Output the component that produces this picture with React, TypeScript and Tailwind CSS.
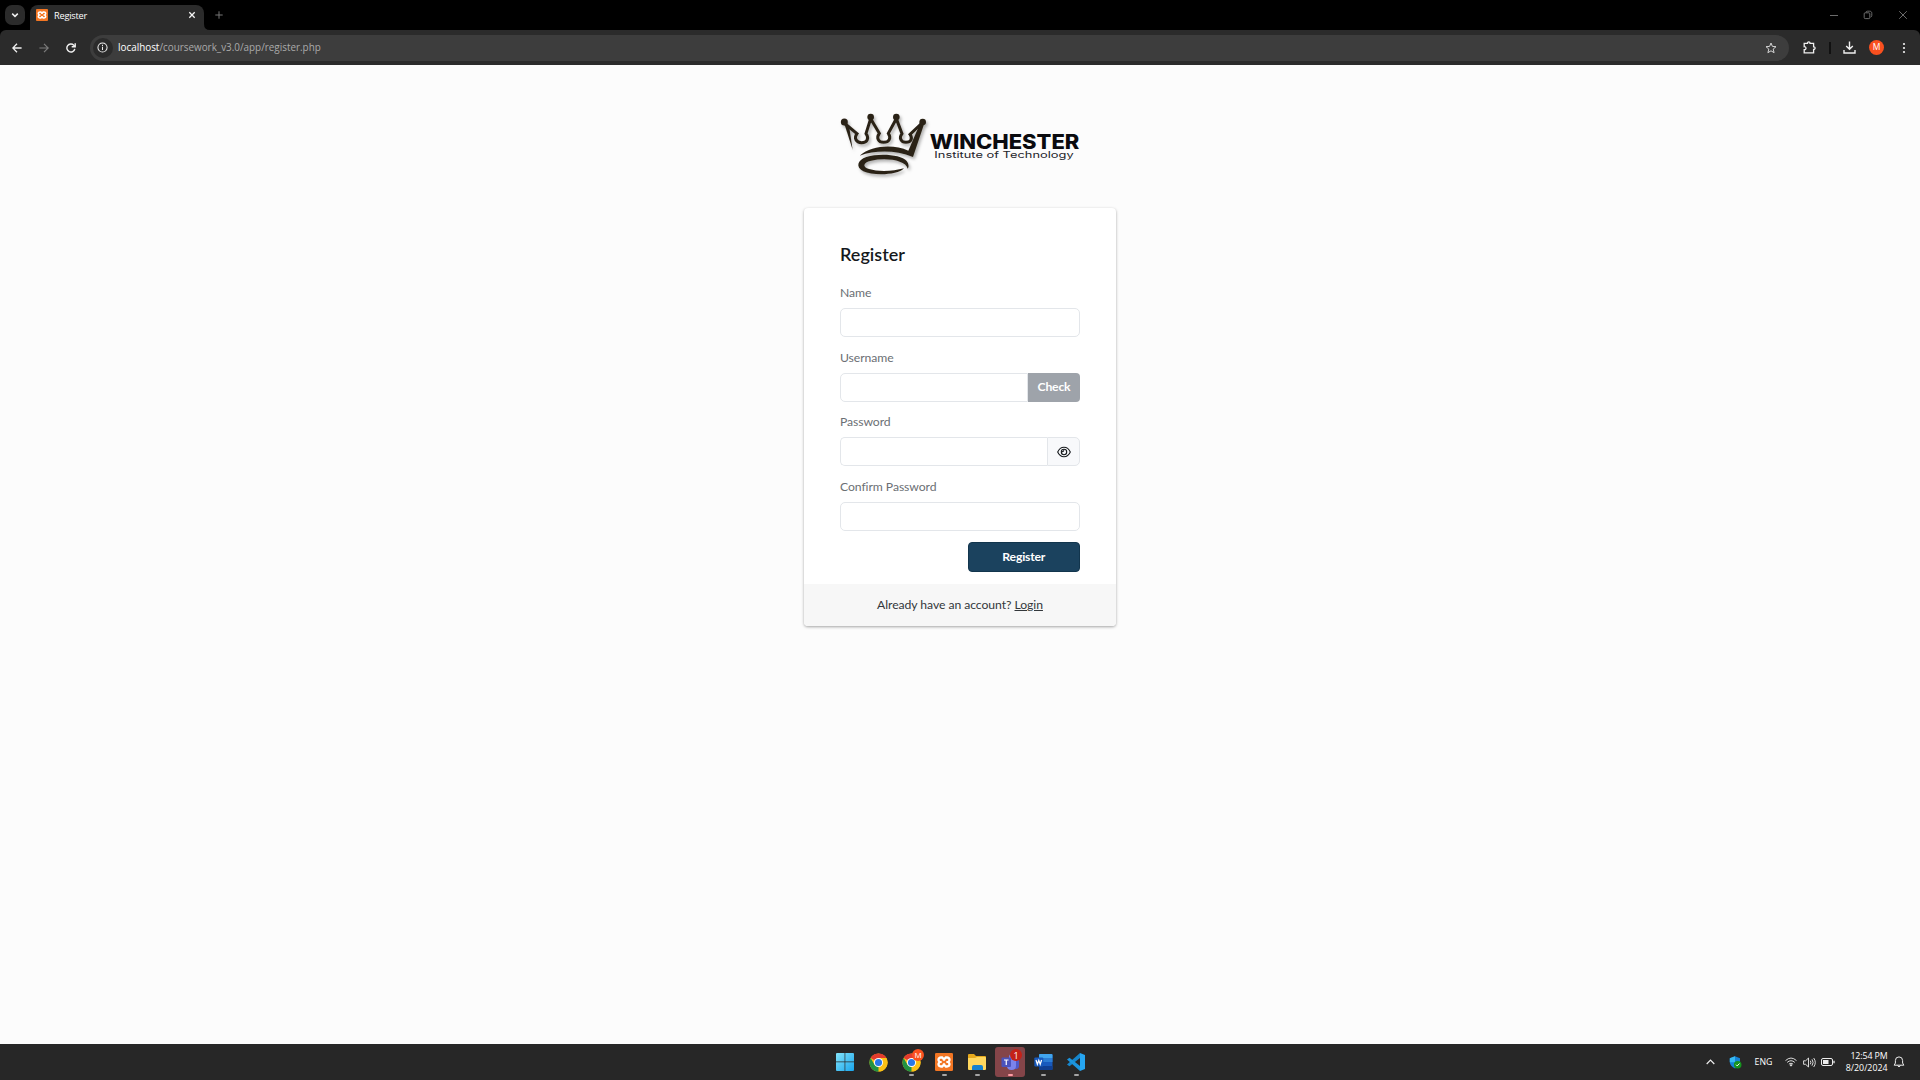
import React from "react";

const ui = "font-['Open_Sans','Noto_Sans',sans-serif]";

function XamppLogo({ className }: { className: string }) {
  return (
    <svg viewBox="0 0 54 54" className={className}>
      <rect width="54" height="54" rx="4" fill="#f37623" />
      <path d="M18 10h5l4 4 4-4h5c6 0 11 4 11 10 0 3-1 5-3 7 2 2 3 4 3 7 0 6-5 10-11 10h-5l-4-4-4 4h-5C12 44 7 40 7 34c0-3 1-5 3-7-2-2-3-4-3-7 0-6 5-10 11-10z" fill="#fff" />
      <path d="M18 17c3 0 4 1 5 3l1 3h6l1-3c1-2 2-3 5-3 2 0 4 1 4 3s-1 4-4 4h-2v6h2c3 0 4 2 4 4s-2 3-4 3c-3 0-4-1-5-3l-1-3h-6l-1 3c-1 2-2 3-5 3-2 0-4-1-4-3s1-4 4-4h2v-6h-2c-3 0-4-2-4-4s2-3 4-3z" fill="#f37623" />
    </svg>
  );
}

function Chrome() {
  return (
    <svg viewBox="0 0 48 48" className="size-[19px]">
      <circle cx="24" cy="24" r="23" fill="#fbc116" />
      <path d="M24 24L4.1 12.5A23 23 0 0 1 43.9 12.5H24z" fill="#e33b2e" />
      <path d="M4.1 12.5L14 29.8 24 35 24 47A23 23 0 0 1 4.1 12.5z" fill="#229342" />
      <path d="M24 47L34 29.8 24 24v-11.5h19.9A23 23 0 0 1 24 47z" fill="#fbc116" />
      <circle cx="24" cy="24" r="11.5" fill="#fff" />
      <circle cx="24" cy="24" r="9" fill="#2878e8" />
    </svg>
  );
}

function TabStrip() {
  return (
    <div className="flex h-[30px] bg-black pl-[5px] text-white">
      <div className="mt-[5px] flex size-5 items-center justify-center rounded-[7px] bg-[#2b2b2b]">
        <svg viewBox="0 0 8 8" className="size-2" fill="none" stroke="#f0f0f0" strokeWidth="1.5"><path d="M1.2 2.6L4 5.4 6.8 2.6" /></svg>
      </div>
      <div className="ml-[5px] mt-[5px] flex h-[25px] w-[174px] items-center rounded-t-[8px] bg-[#2b2b2b] pb-[5px] pl-[6px] pr-[8px]">
        <XamppLogo className="size-3" />
        <span className={`${ui} ml-[6px] mt-px text-[9.2px] leading-none tracking-[-0.2px]`}>Register</span>
        <svg viewBox="0 0 8 8" className="ml-auto size-2" stroke="#f5f5f5" strokeWidth="1.3"><path d="M1.3 1.3l5.4 5.4M6.7 1.3L1.3 6.7" /></svg>
      </div>
      <svg viewBox="0 0 6 6" className="mt-6 size-[6px]"><path d="M0 0Q0 6 6 6H0z" fill="#2b2b2b" /></svg>
      <svg viewBox="0 0 8 8" className="ml-[5px] mt-[11px] size-2" stroke="#777" strokeWidth="1"><path d="M4 .3v7.4M.3 4h7.4" /></svg>
      <div className="ml-auto flex w-[105px] items-start pt-[10px] text-[#777]">
        <svg viewBox="0 0 10 10" className="ml-[14px] size-[10px]" stroke="currentColor" strokeWidth=".9"><path d="M1 5.5h8" /></svg>
        <svg viewBox="0 0 10 10" className="ml-[24px] size-[10px]" fill="none" stroke="currentColor" strokeWidth=".9"><rect x="1.2" y="2.8" width="5.6" height="5.8" rx="1" /><path d="M3 2.4C3 1.6 3.5 1.2 4.4 1.2h2.2C8 1.2 8.8 2 8.8 3.4v2c0 1-.4 1.5-1.2 1.6" /></svg>
        <svg viewBox="0 0 10 10" className="ml-[25px] size-[10px]" stroke="currentColor" strokeWidth=".9"><path d="M1.2 1.2l7.6 7.6M8.8 1.2L1.2 8.8" /></svg>
      </div>
    </div>
  );
}

function Toolbar() {
  return (
    <div className="h-[35px] bg-black">
      <div className="flex h-full items-center rounded-t-[6px] bg-[#2b2b2b]">
        <svg viewBox="0 0 10 10" className="ml-[11.5px] size-[10px]" fill="none" stroke="#f0f0f0" strokeWidth="1.3"><path d="M9.6 5H.9M5 .8L.8 5 5 9.2" /></svg>
        <svg viewBox="0 0 10 10" className="ml-[17px] size-[10px]" fill="none" stroke="#7c7c7c" strokeWidth="1.2"><path d="M.4 5h8.7M5 .8L9.2 5 5 9.2" /></svg>
        <svg viewBox="0 0 10 10" className="ml-[17px] size-[10px]" fill="none" stroke="#f0f0f0" strokeWidth="1.4"><path d="M8.8 5.8A4 4 0 1 1 7.8 2.2L9 3.4" /><path d="M9.2.3v3.5H5.7" /></svg>
        <div className="ml-[14.5px] flex h-[26px] w-[1699px] items-center rounded-full bg-[#3d3d3d]">
          <span className="ml-[2.5px] flex size-5 items-center justify-center rounded-full bg-[#2b2b2b]">
            <svg viewBox="0 0 12 12" className="size-[11px]" fill="none" stroke="#eee" strokeWidth="1.1"><circle cx="6" cy="6" r="5" /><path d="M6 5.3v3.4M6 3.1v1.2" /></svg>
          </span>
          <span className={`${ui} ml-[5.5px] text-[9.9px] leading-none text-[#aaa]`}><span className="text-white">localhost</span>/coursework_v3.0/app/register.php</span>
          <svg viewBox="0 0 12 12" className="ml-auto mr-[12px] size-3" fill="none" stroke="#d5d5d5" strokeWidth="1"><path d="M6 1l1.4 3.4 3.6.3-2.8 2.4.9 3.6L6 8.8l-3.1 1.9.9-3.6L1 4.7l3.6-.3z" /></svg>
        </div>
        <svg viewBox="0 0 13 13" className="ml-[14px] size-[13px]" fill="none" stroke="#f0f0f0" strokeWidth="1.3"><path d="M1.2 2.3H4.5C4.3.4 7.2.4 7 2.3h3.6v3.5c2-.2 2 2.8 0 2.6v3.4H1.2V8.7c2.4.2 2.4-3.2 0-3z" /></svg>
        <span className="ml-[13px] h-3 w-[2px] bg-[#111]" />
        <svg viewBox="0 0 13 13" className="ml-[12px] size-[13px]" fill="none" stroke="#f0f0f0" strokeWidth="1.4"><path d="M6.5.5v7.6M3.2 5l3.3 3.3L9.8 5M1 9v3h11V9" /></svg>
        <span className={`${ui} ml-[13px] flex size-[15px] items-center justify-center rounded-full bg-[#f9501f] text-[8.5px] leading-none text-white`}>M</span>
        <svg viewBox="0 0 4 12" className="ml-[17.5px] h-3 w-1" fill="#f0f0f0"><circle cx="2" cy="2" r="1.1" /><circle cx="2" cy="6" r="1.1" /><circle cx="2" cy="10" r="1.1" /></svg>
      </div>
    </div>
  );
}

function Logo() {
  return (
    <svg viewBox="0 0 840 270" className="h-[90px] w-[280px]">
      <defs>
        <filter id="lift" x="-10%" y="-10%" width="125%" height="130%"><feDropShadow dx="5" dy="7" stdDeviation="4" floodColor="#000" floodOpacity=".3" /></filter>
      </defs>
      <g filter="url(#lift)" fill="#2b2418">
        <circle cx="73" cy="66" r="10.5" /><circle cx="152" cy="51" r="10" /><circle cx="229" cy="51" r="10" /><circle cx="308" cy="66" r="10" />
        <path d="M72 68L98 149 88 83Z" />
        <path d="M76 72L111 101C101 114 108 128 125 128C142 128 148 114 138 101L152 56L178 100C168 114 175 127 191 127C208 127 214 114 205 100L229 56L246 101C236 114 243 127 258 127C273 127 279 115 270 103L306 69" fill="none" stroke="#2b2418" strokeWidth="9" strokeLinejoin="miter" />
        <path d="M119 167C155 136 220 132 265 152L301 68L313 70L279 171C225 149 165 151 119 167Z" />
        <path fillRule="evenodd" d="M252 205C233 226 160 228 130 214C106 201 112 180 139 171C177 159 243 163 260 183C267 192 267 202 263 206C258 181 200 172 153 182C128 188 127 201 147 207C175 216 220 214 252 205Z" />
      </g>
      <text x="329" y="145.5" textLength="449" lengthAdjust="spacingAndGlyphs" fontFamily="Inter, sans-serif" fontWeight="800" fontSize="61" fill="#0b0b0f">WINCHESTER</text>
      <text x="343" y="174" textLength="418" lengthAdjust="spacingAndGlyphs" fontFamily="Inter, sans-serif" fontSize="26" fill="#25252b">Institute of Technology</text>
    </svg>
  );
}

const labelClass = "mb-[7px] block h-4 text-[12.2px] leading-4 tracking-[-0.07px] text-[#6b6f74]";
const inputClass = "h-[29px] border border-[#e3e6ea] bg-white outline-none";

function RegisterCard() {
  return (
    <div className="mt-[18px] flex h-[418px] w-[312px] flex-col overflow-hidden rounded-[4px] bg-white font-['Lato',sans-serif] shadow-[0_1px_3px_rgba(0,0,0,0.35)]">
      <form className="flex flex-1 flex-col px-9 pt-[34px]" onSubmit={(e) => e.preventDefault()}>
        <h1 className="h-6 text-[18px] font-semibold leading-6 text-[#15181d]">Register</h1>
        <div className="mt-[19px]">
          <label className={labelClass}>Name</label>
          <input className={`${inputClass} block w-full rounded-[5px]`} />
        </div>
        <div className="mt-[13px]">
          <label className={labelClass}>Username</label>
          <div className="flex">
            <input className={`${inputClass} w-[188px] rounded-l-[5px]`} />
            <button type="button" className="h-[29px] w-[52px] rounded-r-[4px] bg-[#9ea3aa] text-[12.2px] font-bold leading-none tracking-[-0.2px] text-white">Check</button>
          </div>
        </div>
        <div className="mt-3">
          <label className={labelClass}>Password</label>
          <div className="flex">
            <input type="password" className={`${inputClass} w-[207px] rounded-l-[5px] border-r-0`} />
            <button type="button" className="flex h-[29px] w-[33px] items-center justify-center rounded-r-[5px] border border-[#e3e6ea] bg-[#f8f9fb]">
              <svg viewBox="0 0 14 12" className="h-3 w-[14px]" fill="none" stroke="#16191d" strokeWidth="1.1"><path d="M.7 6C3.5-.4 10.5-.4 13.3 6 10.5 12.4 3.5 12.4.7 6z" /><circle cx="7" cy="6" r="2.7" /><path d="M5 5.4c1 .5 1.8-.1 1.7-1.3" /></svg>
            </button>
          </div>
        </div>
        <div className="mt-[13px]">
          <label className={labelClass}>Confirm Password</label>
          <input type="password" className={`${inputClass} block w-full rounded-[5px]`} />
        </div>
        <button className="ml-auto mt-[11px] h-[30px] w-[112.5px] rounded-[4px] border border-[#12354d] bg-[#1b425e] pt-px text-[12.2px] font-bold leading-none tracking-[-0.2px] text-white">Register</button>
      </form>
      <div className="flex h-[42px] items-center justify-center bg-[#f7f7f7] text-[12.2px] leading-4 tracking-[-0.06px] text-[#33373b]">
        <span>Already have an account? <a className="underline">Login</a></span>
      </div>
    </div>
  );
}

function AppCell({ children, running = false, active = false }: { children: React.ReactNode; running?: boolean; active?: boolean }) {
  return (
    <div className={`relative flex size-[30px] items-center justify-center rounded-[3px] ${active ? "bg-[#844549]" : ""}`}>
      {children}
      {running && <span className={`absolute bottom-[1px] left-[13px] h-[2px] w-[5px] rounded-full ${active ? "bg-[#ff9ca5]" : "bg-[#a5a5a5]"}`} />}
    </div>
  );
}

function Taskbar() {
  return (
    <div className={`${ui} flex h-9 items-center bg-[#272727] pr-[15px] text-white`}>
      <div className="flex w-[830px] shrink-0" />
      <div className="flex items-center gap-[3px]">
        <AppCell>
          <svg viewBox="0 0 18 18" className="size-[18px]"><defs><linearGradient id="win" x2="1" y2="1"><stop stopColor="#83e4fb" /><stop offset="1" stopColor="#19a5ec" /></linearGradient></defs><path d="M0 1q0-1 1-1h7.6v8.6H0zM9.3 0H17q1 0 1 1v7.6H9.3zM0 9.3h8.6V18H1q-1 0-1-1zM9.3 9.3H18V17q0 1-1 1H9.3z" fill="url(#win)" /></svg>
        </AppCell>
        <AppCell><Chrome /></AppCell>
        <AppCell running>
          <Chrome />
          <span className="absolute left-[16px] top-[2px] flex size-3 items-center justify-center rounded-full bg-[#f9501f] text-[8px] leading-none">M</span>
        </AppCell>
        <AppCell running><XamppLogo className="size-[18px]" /></AppCell>
        <AppCell running>
          <svg viewBox="0 0 20 18" className="h-[18px] w-5"><path d="M1 2q0-1 1-1h5l2 2h9q1 0 1 1v5H1z" fill="#e6a91c" /><path d="M1 5h7l2-1h8q1 0 1 1v11q0 1-1 1H2q-1 0-1-1z" fill="#ffd75e" /><path d="M5 17v-3q0-2 2-2h7q2 0 2 2v3z" fill="#1681cf" /></svg>
        </AppCell>
        <AppCell running active>
          <svg viewBox="0 0 19 18" className="h-[18px] w-[19px]"><circle cx="11" cy="4" r="3" fill="#7b83eb" /><path d="M11 7h7v6q0 3-3 3h-2z" fill="#5059c9" /><path d="M6 7h9v6q0 4-4.5 4T6 13z" fill="#7b83eb" /><rect x=".5" y="4.5" width="9.5" height="9.5" rx="1" fill="#4b53bc" /><path d="M3 7h4.5M5.25 7v5" stroke="#fff" strokeWidth="1.2" /></svg>
          <span className="absolute left-[15px] top-[2px] flex size-3 items-center justify-center rounded-full bg-[#c42218] text-[9px] leading-none">1</span>
        </AppCell>
        <AppCell running>
          <svg viewBox="0 0 19 18" className="h-[18px] w-[19px]"><rect x="5" y="1" width="13.5" height="16" rx="1" fill="#185abd" /><path d="M5 2q0-1 1-1h11.5q1 0 1 1v3H5z" fill="#41a5ee" /><path d="M5 5h13.5v4H5z" fill="#2b7cd3" /><path d="M5 13h13.5v3q0 1-1 1H6q-1 0-1-1z" fill="#103f91" /><rect x=".3" y="4.5" width="9" height="9" rx="1" fill="#185abd" /><path d="M2 7l1.4 4.3L4.8 7.4l1.4 3.9L7.6 7" fill="none" stroke="#fff" strokeWidth="1.2" /></svg>
        </AppCell>
        <AppCell running>
          <svg viewBox="0 0 18 18" className="size-[18px]"><path d="M13 0l5 2v14l-5 2z" fill="#26a6f2" /><path d="M13 0v5L2.5 13.3 0 11.6z" fill="#1686cc" /><path d="M13 18v-5L2.5 4.7 0 6.4z" fill="#1b94dd" /></svg>
        </AppCell>
      </div>
      <div className="ml-auto flex items-center">
        <svg viewBox="0 0 9 6" className="h-[6px] w-[9px]" fill="none" stroke="#eee" strokeWidth="1.2"><path d="M.7 5l3.8-3.8L8.3 5" /></svg>
        <svg viewBox="0 0 13 13" className="ml-[14px] size-[13px]"><path d="M6 .3l5 2V6c0 3-2 5-5 6.5C3 11 .8 9 .8 6V2.3z" fill="#1583d8" /><path d="M6 .3v6H.8v-4z" fill="#37b9f1" /><circle cx="8.7" cy="8.7" r="3.8" fill="#16941f" /><path d="M7 8.7l1.2 1.2L10.5 7.5" fill="none" stroke="#fff" /></svg>
        <span className="ml-[12.5px] mt-px w-[18px] text-[8.8px] leading-none">ENG</span>
        <svg viewBox="0 0 12 10" className="ml-[12.5px] h-[10px] w-3" fill="none" stroke="#eee" strokeWidth=".9"><path d="M.5 3.6Q6-1.5 11.5 3.6M2.2 5.4q3.8-3.4 7.6 0M3.9 7.1q2.1-1.8 4.2 0" /><circle cx="6" cy="8.3" r=".7" fill="#eee" /></svg>
        <svg viewBox="0 0 13 11" className="ml-[6px] h-[11px] w-[13px]" fill="none" stroke="#eee" strokeWidth=".9"><path d="M.6 3.8h2L5.5 1v9L2.6 7.3h-2zM7.3 3.7q1.2 1.8 0 3.6M9 2.3q2.2 3.2 0 6.4M10.7 1q3.2 4.5 0 9" /></svg>
        <svg viewBox="0 0 14 8" className="ml-[5px] h-2 w-[14px]" fill="none" stroke="#eee" strokeWidth="1"><rect x=".5" y=".5" width="11" height="7" rx="1.5" /><rect x="2" y="2" width="5.5" height="4" fill="#eee" stroke="none" /><path d="M13 2.8v2.4" strokeWidth="1.3" /></svg>
        <div className="ml-[9.5px] w-[43px] whitespace-nowrap text-right text-[8.8px] leading-[12px]"><div className="tracking-[-0.1px]">12:54 PM</div><div>8/20/2024</div></div>
        <svg viewBox="0 0 12 12" className="ml-[5.5px] size-3" fill="none" stroke="#eee" strokeWidth="1"><path d="M1.2 9.2L2.4 7V4.5a3.6 3.6 0 0 1 7.2 0V7l1.2 2.2zM4.5 9.6q1.5 2.6 3 0" /></svg>
      </div>
    </div>
  );
}

export default function App() {
  return (
    <div className="flex h-[1080px] w-[1920px] flex-col overflow-hidden bg-[#fcfcfc]">
      <TabStrip />
      <Toolbar />
      <main className="flex flex-1 flex-col items-center pt-[35px]">
        <Logo />
        <RegisterCard />
      </main>
      <Taskbar />
    </div>
  );
}
